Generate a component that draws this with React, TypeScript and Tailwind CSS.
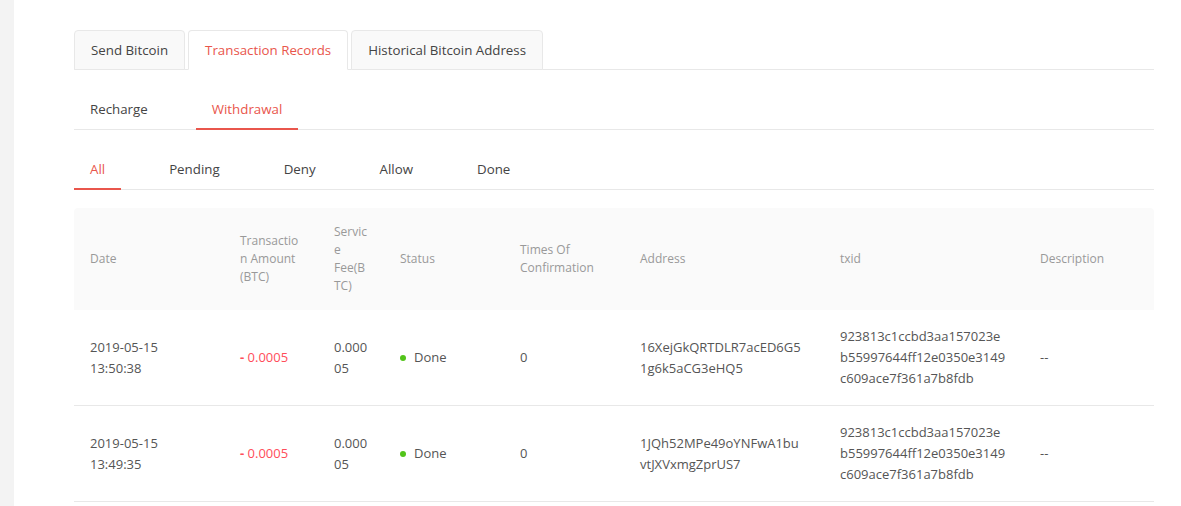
import React from "react";

type Row = {
  date: string;
  time: string;
  amount: string;
  fee: string;
  status: string;
  confirmations: string;
  address: string;
  txid: string;
  description: string;
};

const rows: Row[] = [
  {
    date: "2019-05-15",
    time: "13:50:38",
    amount: "0.0005",
    fee: "0.00005",
    status: "Done",
    confirmations: "0",
    address: "16XejGkQRTDLR7acED6G51g6k5aCG3eHQ5",
    txid: "923813c1ccbd3aa157023eb55997644ff12e0350e3149c609ace7f361a7b8fdb",
    description: "--",
  },
  {
    date: "2019-05-15",
    time: "13:49:35",
    amount: "0.0005",
    fee: "0.00005",
    status: "Done",
    confirmations: "0",
    address: "1JQh52MPe49oYNFwA1buvtJXVxmgZprUS7",
    txid: "923813c1ccbd3aa157023eb55997644ff12e0350e3149c609ace7f361a7b8fdb",
    description: "--",
  },
];

const mainTabs = ["Send Bitcoin", "Transaction Records", "Historical Bitcoin Address"];
const subTabs = ["Recharge", "Withdrawal"];
const filters = ["All", "Pending", "Deny", "Allow", "Done"];

const headers = [
  "Date",
  "Transaction Amount (BTC)",
  "Service Fee(BTC)",
  "Status",
  "Times Of Confirmation",
  "Address",
  "txid",
  "Description",
];

function UnderlineTabs({ items, active }: { items: string[]; active: number }) {
  return (
    <div className="mt-5 flex h-10 gap-8 border-b border-[#e8e8e8]">
      {items.map((label, i) => (
        <div
          key={label}
          className={
            i === active
              ? "-mb-px flex h-10 items-center border-b-2 border-[#e9564c] px-4 pt-px text-[13.3px] text-[#e9564c]"
              : "-mb-px flex h-10 items-center border-b-2 border-transparent px-4 pt-px text-[13.3px] text-[#444]"
          }
        >
          {label}
        </div>
      ))}
    </div>
  );
}

export default function App() {
  return (
    <div
      className="flex min-h-[506px] bg-white"
      style={{ fontFamily: '"Open Sans", "Noto Sans", sans-serif' }}
    >
      <div className="w-[14px] shrink-0 bg-[#f3f3f3]" />
      <div className="ml-[60px] w-[1080px] pt-[30px]">
        {/* top tabs */}
        <div className="flex gap-[3px] border-b border-[#e8e8e8]">
          {mainTabs.map((label, i) => (
            <div
              key={label}
              className={
                i === 1
                  ? "-mb-px flex h-10 items-center rounded-t border border-b-white border-[#e8e8e8] bg-white px-4 pt-px text-[13.3px] text-[#e9564c]"
                  : "-mb-px flex h-10 items-center rounded-t border border-[#e8e8e8] bg-[#f9f9f9] px-4 pt-px text-[13.3px] text-[#444]"
              }
            >
              {label}
            </div>
          ))}
        </div>

        <UnderlineTabs items={subTabs} active={1} />
        <UnderlineTabs items={filters} active={0} />

        {/* records table */}
        <table className="mt-[18px] w-[1080px] table-fixed border-collapse">
          <colgroup>
            <col className="w-[150px]" />
            <col className="w-[94px]" />
            <col className="w-[66px]" />
            <col className="w-[120px]" />
            <col className="w-[120px]" />
            <col className="w-[200px]" />
            <col className="w-[200px]" />
            <col className="w-[130px]" />
          </colgroup>
          <thead>
            <tr className="bg-[#fafafa]">
              {headers.map((h, i) => (
                <th
                  key={h}
                  className={
                    "px-4 py-[15px] text-left align-middle text-[12px] font-normal leading-[18px] text-[#999] [overflow-wrap:anywhere] " +
                    (i === 0 ? "rounded-tl" : i === headers.length - 1 ? "rounded-tr" : "")
                  }
                >
                  {h}
                </th>
              ))}
            </tr>
          </thead>
          <tbody className="text-[13px] leading-[21px] text-[#555]">
            {rows.map((r) => (
              <tr key={r.time} className="border-b border-[#e8e8e8]">
                <td className="px-4 py-4 align-middle">
                  <div>{r.date}</div>
                  <div>{r.time}</div>
                </td>
                <td className="px-4 py-4 align-middle text-[#ff4d5a] [overflow-wrap:anywhere]">
                  <span className="font-bold">-</span> {r.amount}
                </td>
                <td className="break-all px-4 py-4 align-middle">{r.fee}</td>
                <td className="px-4 py-4 align-middle">
                  <span className="flex items-center">
                    <span className="mr-2 inline-block h-[6px] w-[6px] rounded-full bg-[#52c41a]" />
                    {r.status}
                  </span>
                </td>
                <td className="px-4 py-4 align-middle">{r.confirmations}</td>
                <td className="break-all pl-4 pr-[21px] py-4 align-middle">{r.address}</td>
                <td className="break-all px-4 py-4 align-middle">{r.txid}</td>
                <td className="px-4 py-4 align-middle">{r.description}</td>
              </tr>
            ))}
          </tbody>
        </table>
      </div>
    </div>
  );
}
